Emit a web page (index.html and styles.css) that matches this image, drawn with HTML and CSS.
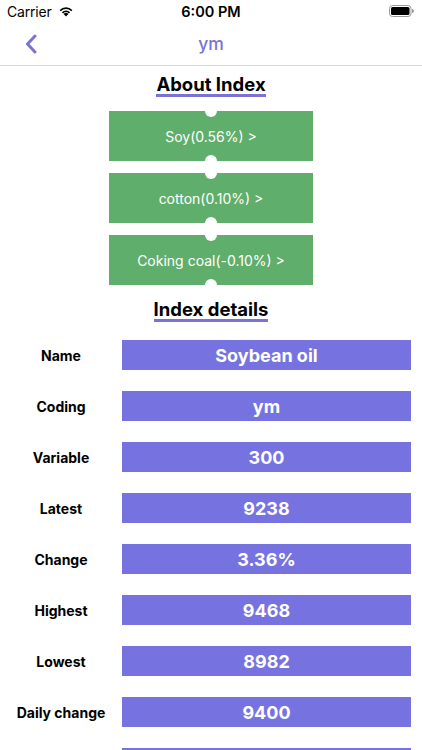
FILE: index.html
```html
<!DOCTYPE html>
<html>
<head>
<meta charset="utf-8">
<link rel="stylesheet" href="styles.css">
</head>
<body>
<div class="status">
  <div class="status-left">
    <span class="carrier">Carrier</span>
    <svg class="wifi" width="16" height="12" viewBox="0 0 16 12">
      <path d="M8 11.5 L5.6 9 A3.4 3.4 0 0 1 10.4 9 Z" fill="#000"/>
      <path d="M3.9 7.3 A5.8 5.8 0 0 1 12.1 7.3 L10.9 8.5 A4.1 4.1 0 0 0 5.1 8.5 Z" fill="#000"/>
      <path d="M1.6 5 A9 9 0 0 1 14.4 5 L13.2 6.2 A7.3 7.3 0 0 0 2.8 6.2 Z" fill="#000"/>
    </svg>
  </div>
  <div class="time">6:00 PM</div>
  <div class="status-right">
    <svg width="25" height="12" viewBox="0 0 25 12">
      <rect x="0.5" y="0.5" width="21.5" height="11" rx="3" fill="none" stroke="#999" stroke-width="1"/>
      <rect x="2" y="2" width="18.5" height="8" rx="1.6" fill="#000"/>
      <path d="M23 4 A2 2 0 0 1 23 8 Z" fill="#999"/>
    </svg>
  </div>
</div>
<div class="nav">
  <svg class="back" width="12" height="20" viewBox="0 0 12 20">
    <path d="M10 2 L2.5 10 L10 18" fill="none" stroke="#7a72d8" stroke-width="3" stroke-linecap="round" stroke-linejoin="round"/>
  </svg>
  <div class="nav-title">ym</div>
</div>
<main class="content">
  <h2 class="heading"><span>About Index</span></h2>
  <div class="chain">
    <div class="link">Soy(0.56%) &gt;</div>
    <div class="link">cotton(0.10%) &gt;</div>
    <div class="link">Coking coal(-0.10%) &gt;</div>
  </div>
  <h2 class="heading"><span>Index details</span></h2>
  <div class="details">
    <div class="row"><div class="label">Name</div><div class="value">Soybean oil</div></div>
    <div class="row"><div class="label">Coding</div><div class="value">ym</div></div>
    <div class="row"><div class="label">Variable</div><div class="value">300</div></div>
    <div class="row"><div class="label">Latest</div><div class="value">9238</div></div>
    <div class="row"><div class="label">Change</div><div class="value">3.36%</div></div>
    <div class="row"><div class="label">Highest</div><div class="value">9468</div></div>
    <div class="row"><div class="label">Lowest</div><div class="value">8982</div></div>
    <div class="row"><div class="label">Daily change</div><div class="value">9400</div></div>
    <div class="row"><div class="label">Weekly</div><div class="value">9300</div></div>
  </div>
</main>
</body>
</html>
```
FILE: styles.css
```css
* { box-sizing: border-box; }
html, body {
  margin: 0;
  padding: 0;
  background: #fff;
  font-family: Inter, "Liberation Sans", sans-serif;
  color: #000;
  overflow: hidden;
  height: 750px;
}
.status {
  height: 22px;
  display: flex;
  align-items: center;
  justify-content: space-between;
  padding: 0 8px 0 7px;
  position: relative;
}
.status-left {
  display: flex;
  align-items: center;
  gap: 6px;
  font-size: 14px;
  letter-spacing: -0.2px;
}
.wifi { margin-top: -1px; }
.time {
  position: absolute;
  left: 0;
  right: 0;
  text-align: center;
  font-size: 14.5px;
  font-weight: 600;
  pointer-events: none;
}
.status-right { display: flex; align-items: center; }
.nav {
  height: 44px;
  display: flex;
  align-items: center;
  justify-content: center;
  position: relative;
  border-bottom: 1px solid #d8d8d8;
}
.back {
  position: absolute;
  left: 25px;
  top: 12px;
}
.nav-title {
  font-size: 17.5px;
  color: #7a72d8;
  font-weight: 500;
}
.content {
  display: flex;
  flex-direction: column;
  align-items: center;
}
.heading {
  margin: 7px 0 0;
  font-size: 18.5px;
  font-weight: 700;
  line-height: 22px;
  text-align: center;
}
.heading span {
  display: inline-block;
  border-bottom: 3px solid #7a72d8;
  line-height: 19px;
}
.chain {
  margin-top: 14px;
  display: flex;
  flex-direction: column;
  gap: 12px;
  width: 204px;
}
.chain + .heading { margin-top: 13px; }
.link {
  position: relative;
  height: 50px;
  background: #60ae6c;
  color: #fff;
  font-size: 14px;
  display: flex;
  align-items: center;
  justify-content: center;
}
.link::before,
.link::after {
  content: "";
  position: absolute;
  left: 50%;
  width: 12px;
  height: 12px;
  margin-left: -6px;
  border-radius: 50%;
  background: #fff;
}
.link::before { top: -6px; }
.link::after { bottom: -6px; }
.details {
  margin-top: 18px;
  width: 100%;
  display: flex;
  flex-direction: column;
  gap: 21px;
  padding-right: 11px;
}
.row {
  display: flex;
  align-items: center;
}
.label {
  width: 122px;
  text-align: center;
  font-size: 14px;
  font-weight: 700;
}
.value {
  flex: 1;
  height: 30px;
  background: #7673e0;
  color: #fff;
  font-size: 18px;
  font-weight: 700;
  display: flex;
  align-items: center;
  justify-content: center;
}
```
